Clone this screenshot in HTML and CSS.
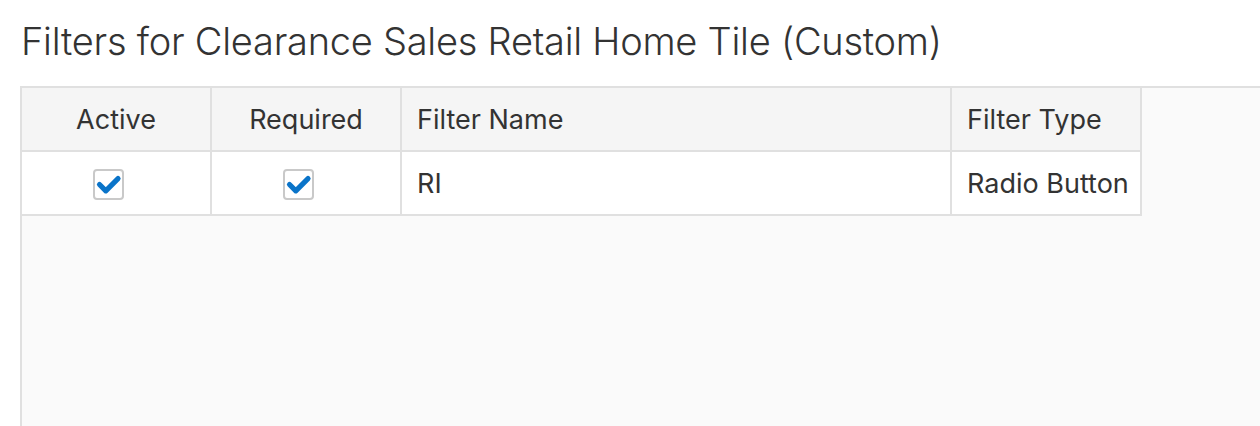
FILE: index.html
```html
<!DOCTYPE html>
<html>
<head>
<meta charset="utf-8">
<link rel="stylesheet" href="styles.css">
</head>
<body>
<div class="page">
  <h1 class="title">Filters for Clearance Sales Retail Home Tile (Custom)</h1>
  <div class="panel">
    <table class="grid">
      <thead>
        <tr>
          <th class="c-check">Active</th>
          <th class="c-check">Required</th>
          <th class="c-name">Filter Name</th>
          <th class="c-type">Filter Type</th>
        </tr>
      </thead>
      <tbody>
        <tr>
          <td class="c-check"><span class="cb"><svg viewBox="0 0 31 31" width="31" height="31"><path d="M6.5 15.5 L12.8 21.8 L25 9.6" fill="none" stroke="#0a74c9" stroke-width="5.2" stroke-linecap="round" stroke-linejoin="round"/></svg></span></td>
          <td class="c-check"><span class="cb"><svg viewBox="0 0 31 31" width="31" height="31"><path d="M6.5 15.5 L12.8 21.8 L25 9.6" fill="none" stroke="#0a74c9" stroke-width="5.2" stroke-linecap="round" stroke-linejoin="round"/></svg></span></td>
          <td class="c-name">RI</td>
          <td class="c-type">Radio Button</td>
        </tr>
      </tbody>
    </table>
  </div>
</div>
</body>
</html>
```
FILE: styles.css
```css
html, body {
  margin: 0;
  padding: 0;
  background: #ffffff;
}
.page {
  padding: 0 0 0 20px;
}
.title {
  margin: 0;
  padding: 19px 0 0 1px;
  height: 86px;
  box-sizing: border-box;
  font-family: Inter, "Liberation Sans", sans-serif;
  font-weight: 300;
  font-size: 38px;
  line-height: 44px;
  color: #333333;
  letter-spacing: -0.25px;
}
.panel {
  border-top: 2px solid #e0e0e0;
  border-left: 2px solid #e0e0e0;
  background: #fafafa;
  height: 400px;
}
.grid {
  border-collapse: separate;
  border-spacing: 0;
  font-family: Inter, "Liberation Sans", sans-serif;
  font-size: 27px;
  color: #333333;
}
.grid th, .grid td {
  border-right: 2px solid #e0e0e0;
  border-bottom: 2px solid #e0e0e0;
  height: 62px;
  padding: 0;
  box-sizing: content-box;
  font-weight: 400;
  white-space: nowrap;
}
.grid th {
  background: #f5f5f5;
}
.grid td {
  background: #ffffff;
}
.c-check {
  width: 188px;
  min-width: 188px;
  max-width: 188px;
  text-align: center;
}
.c-name {
  width: 533px;
  padding-left: 15px !important;
  text-align: left;
}
.c-type {
  width: 173px;
  padding-left: 15px !important;
  text-align: left;
}
.cb {
  display: inline-block;
  width: 31px;
  height: 31px;
  box-sizing: border-box;
  border: 2px solid #c9c9c9;
  border-radius: 4px;
  background: #ffffff;
  vertical-align: middle;
  margin-right: 16px;
  position: relative;
}
.cb svg {
  position: absolute;
  left: -2px;
  top: -2px;
}
```
